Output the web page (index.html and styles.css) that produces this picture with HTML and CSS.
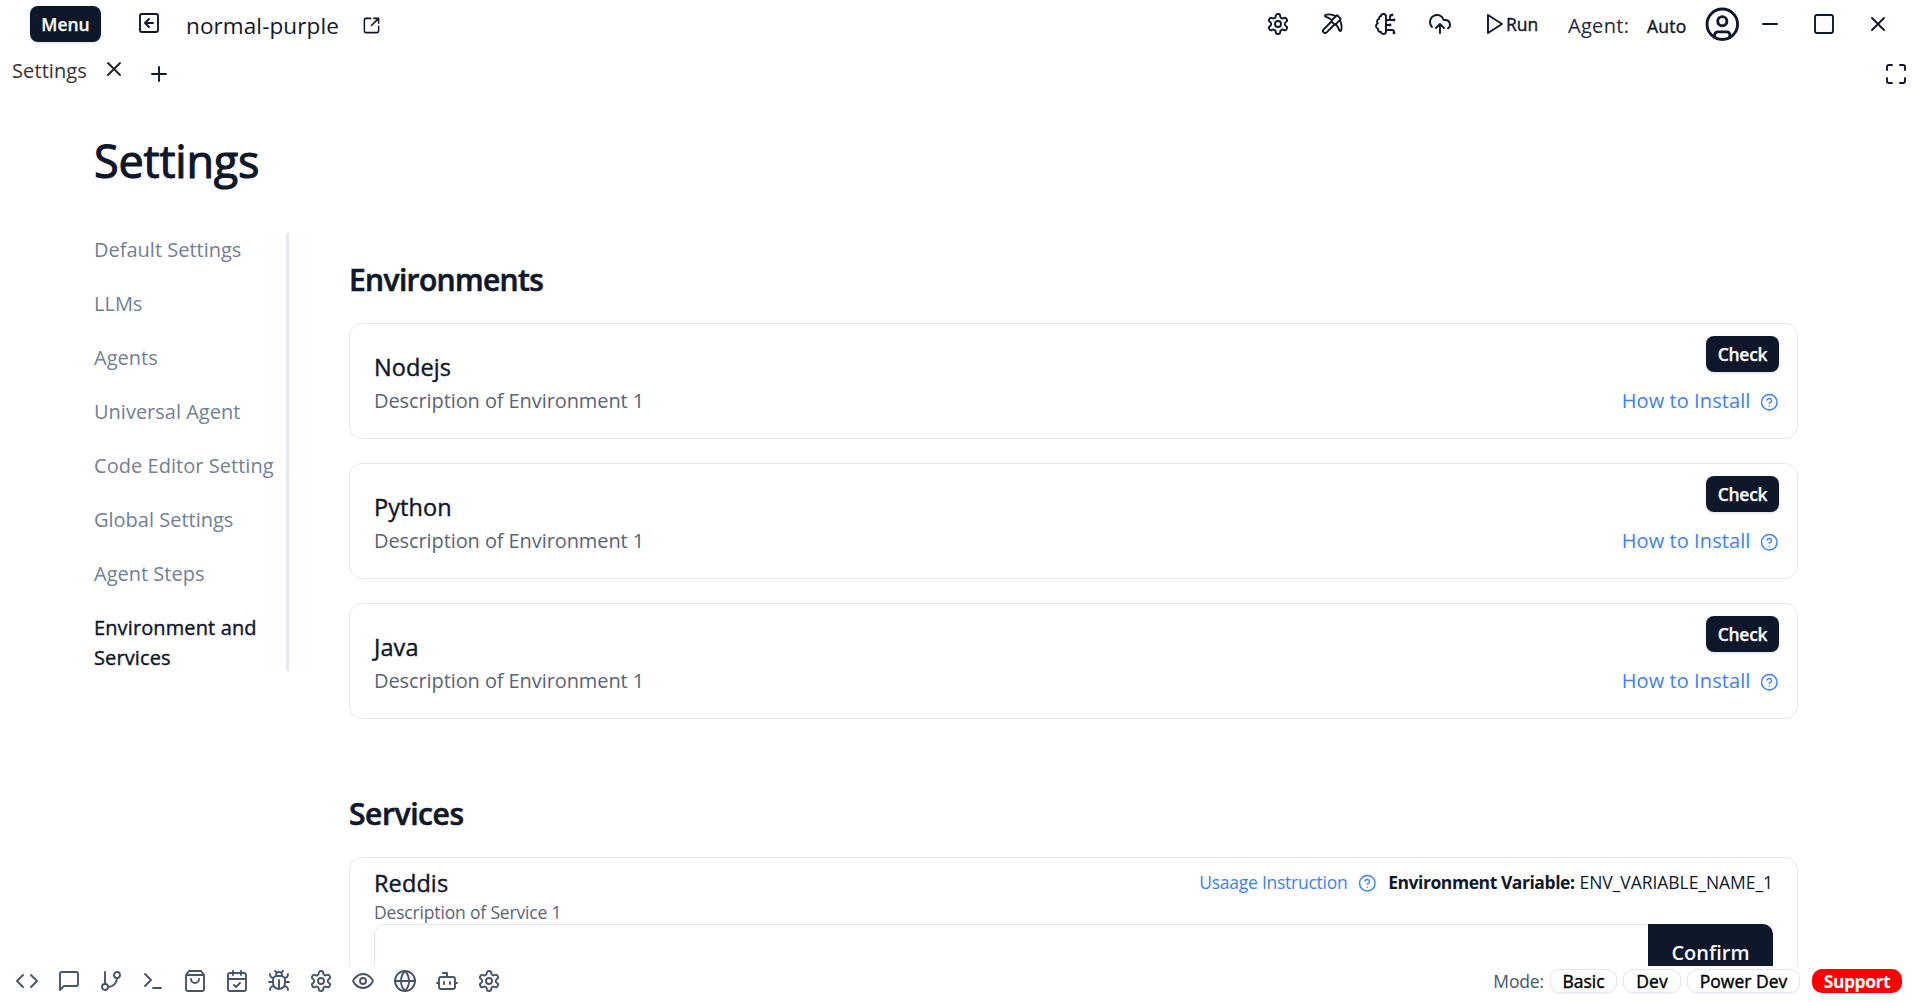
FILE: index.html
```html
<!DOCTYPE html>
<html lang="en">
<head>
<meta charset="utf-8">
<title>Settings</title>
<link rel="stylesheet" href="styles.css">
</head>
<body>
<svg class="sprite" aria-hidden="true">
  <symbol id="gear" viewBox="0 0 24 24"><path d="M12.22 2h-.44a2 2 0 0 0-2 2v.18a2 2 0 0 1-1 1.73l-.43.25a2 2 0 0 1-2 0l-.15-.08a2 2 0 0 0-2.73.73l-.22.38a2 2 0 0 0 .73 2.73l.15.1a2 2 0 0 1 1 1.72v.51a2 2 0 0 1-1 1.74l-.15.09a2 2 0 0 0-.73 2.73l.22.38a2 2 0 0 0 2.73.73l.15-.08a2 2 0 0 1 2 0l.43.25a2 2 0 0 1 1 1.73V20a2 2 0 0 0 2 2h.44a2 2 0 0 0 2-2v-.18a2 2 0 0 1 1-1.73l.43-.25a2 2 0 0 1 2 0l.15.08a2 2 0 0 0 2.73-.73l.22-.39a2 2 0 0 0-.73-2.73l-.15-.08a2 2 0 0 1-1-1.74v-.5a2 2 0 0 1 1-1.74l.15-.09a2 2 0 0 0 .73-2.73l-.22-.38a2 2 0 0 0-2.73-.73l-.15.08a2 2 0 0 1-2 0l-.43-.25a2 2 0 0 1-1-1.73V4a2 2 0 0 0-2-2z"/><circle cx="12" cy="12" r="3"/></symbol>
  <symbol id="close" viewBox="0 0 24 24"><path d="M18 6 6 18M6 6l12 12"/></symbol>
  <symbol id="help" viewBox="0 0 24 24"><circle cx="12" cy="12" r="10"/><path d="M9.09 9a3 3 0 0 1 5.83 1c0 2-3 3-3 3M12 17h.01"/></symbol>
</svg>

<header class="topbar">
  <button class="btn menu">Menu</button>
  <svg class="icon back" viewBox="0 0 24 24"><rect x="3" y="3" width="18" height="18" rx="2"/><path d="m12 8-4 4 4 4M16 12H8"/></svg>
  <span class="project">normal-purple</span>
  <svg class="icon external" viewBox="0 0 24 24"><path d="M21 13v6a2 2 0 0 1-2 2H5a2 2 0 0 1-2-2V5a2 2 0 0 1 2-2h6M21 3l-9 9M15 3h6v6"/></svg>
  <nav class="tools">
    <svg class="icon"><use href="#gear"/></svg>
    <svg class="icon" viewBox="0 0 24 24"><path d="M14.531 12.469 6.619 20.38a1 1 0 1 1-3-3l7.912-7.912"/><path d="M15.686 4.314A12.5 12.5 0 0 0 5.461 2.958 1 1 0 0 0 5.58 4.71a22 22 0 0 1 6.318 3.393"/><path d="M17.7 3.7a1 1 0 0 0-1.4 0l-4.6 4.6a1 1 0 0 0 0 1.4l2.6 2.6a1 1 0 0 0 1.4 0l4.6-4.6a1 1 0 0 0 0-1.4z"/><path d="M19.686 8.314a12.501 12.501 0 0 1 1.356 10.225 1 1 0 0 1-1.751-.119 22 22 0 0 0-3.393-6.319"/></svg>
    <svg class="icon" viewBox="0 0 24 24"><path d="M12 4.5a2.5 2.5 0 0 0-4.96-.46 2.5 2.5 0 0 0-1.98 3 2.5 2.5 0 0 0-1.32 4.24 3 3 0 0 0 .34 5.58 2.5 2.5 0 0 0 2.96 3.08 2.5 2.5 0 0 0 4.91.05L12 20V4.5Z"/><path d="M16 8V5c0-1.1.9-2 2-2M12 13h4M12 18h6a2 2 0 0 1 2 2v1M12 8h8"/><path d="M20.5 8a.5.5 0 1 1-1 0 .5.5 0 0 1 1 0ZM16.5 13a.5.5 0 1 1-1 0 .5.5 0 0 1 1 0ZM20.5 21a.5.5 0 1 1-1 0 .5.5 0 0 1 1 0ZM18.5 3a.5.5 0 1 1-1 0 .5.5 0 0 1 1 0Z"/></svg>
    <svg class="icon" viewBox="0 0 24 24"><path d="M4 14.899A7 7 0 1 1 15.71 8h1.79a4.5 4.5 0 0 1 2.5 8.242M12 12v9M16 16l-4-4-4 4"/></svg>
  </nav>
  <button class="run"><svg class="icon" viewBox="0 0 24 24"><path d="M5 3l14 9-14 9z"/></svg><span>Run</span></button>
  <span class="agent">Agent:</span>
  <span class="auto">Auto</span>
  <svg class="icon user" viewBox="0 0 24 24"><circle cx="12" cy="12" r="10"/><circle cx="12" cy="10" r="3"/><path d="M7 20.662V19a2 2 0 0 1 2-2h6a2 2 0 0 1 2 2v1.662"/></svg>
  <div class="window-controls">
    <svg class="icon" viewBox="0 0 24 24"><path d="M5 12h14"/></svg>
    <svg class="icon" viewBox="0 0 24 24"><rect x="3" y="3" width="18" height="18" rx="2"/></svg>
    <svg class="icon"><use href="#close"/></svg>
  </div>
</header>

<div class="tabs">
  <span class="tab">Settings</span>
  <svg class="icon tab-close"><use href="#close"/></svg>
  <svg class="icon tab-add" viewBox="0 0 24 24"><path d="M5 12h14M12 5v14"/></svg>
  <svg class="icon maximize" viewBox="0 0 24 24"><path d="M8 3H5a2 2 0 0 0-2 2v3M21 8V5a2 2 0 0 0-2-2h-3M3 16v3a2 2 0 0 0 2 2h3M16 21h3a2 2 0 0 0 2-2v-3"/></svg>
</div>

<main class="page">
  <h1>Settings</h1>
  <div class="columns">
    <nav class="sidebar">
      <a>Default Settings</a>
      <a>LLMs</a>
      <a>Agents</a>
      <a>Universal Agent</a>
      <a class="wide">Code Editor Setting</a>
      <a>Global Settings</a>
      <a>Agent Steps</a>
      <a class="active">Environment and Services</a>
    </nav>
    <div class="content">
      <h2 class="tight">Environments</h2>
      <section class="cards">
        <article class="card">
          <div><h3>Nodejs</h3><p>Description of Environment 1</p></div>
          <div class="actions"><button class="btn check">Check</button><a class="link">How to Install<svg class="icon help"><use href="#help"/></svg></a></div>
        </article>
        <article class="card">
          <div><h3>Python</h3><p>Description of Environment 1</p></div>
          <div class="actions"><button class="btn check">Check</button><a class="link">How to Install<svg class="icon help"><use href="#help"/></svg></a></div>
        </article>
        <article class="card">
          <div><h3>Java</h3><p>Description of Environment 1</p></div>
          <div class="actions"><button class="btn check">Check</button><a class="link">How to Install<svg class="icon help"><use href="#help"/></svg></a></div>
        </article>
      </section>
      <h2 class="services">Services</h2>
      <article class="service">
        <div class="service-head">
          <div><h3>Reddis</h3><p>Description of Service 1</p></div>
          <div class="usage"><a class="link small">Usaage Instruction<svg class="icon help"><use href="#help"/></svg></a><b>Environment Variable:</b><span>ENV_VARIABLE_NAME_1</span></div>
        </div>
        <div class="field"><input type="text" aria-label="Value"><button class="confirm">Confirm</button></div>
      </article>
    </div>
  </div>
</main>

<footer class="statusbar">
  <nav class="panels">
    <svg class="icon" viewBox="0 0 24 24"><path d="m16 18 6-6-6-6M8 6l-6 6 6 6"/></svg>
    <svg class="icon" viewBox="0 0 24 24"><path d="M21 15a2 2 0 0 1-2 2H7l-4 4V5a2 2 0 0 1 2-2h14a2 2 0 0 1 2 2z"/></svg>
    <svg class="icon" viewBox="0 0 24 24"><path d="M6 3v12M18 9a9 9 0 0 1-9 9"/><circle cx="18" cy="6" r="3"/><circle cx="6" cy="18" r="3"/></svg>
    <svg class="icon" viewBox="0 0 24 24"><path d="m4 17 6-6-6-6M12 19h8"/></svg>
    <svg class="icon" viewBox="0 0 24 24"><path d="M6 2 3 6v14a2 2 0 0 0 2 2h14a2 2 0 0 0 2-2V6l-3-4ZM3 6h18M16 10a4 4 0 0 1-8 0"/></svg>
    <svg class="icon" viewBox="0 0 24 24"><rect x="3" y="4" width="18" height="18" rx="2"/><path d="M8 2v4M16 2v4M3 10h18M9 16l2 2 4-4"/></svg>
    <svg class="icon" viewBox="0 0 24 24"><path d="m8 2 1.88 1.88M14.12 3.88 16 2M9 7.13v-1a3.003 3.003 0 1 1 6 0v1M12 20c-3.3 0-6-2.7-6-6v-3a4 4 0 0 1 4-4h4a4 4 0 0 1 4 4v3c0 3.3-2.7 6-6 6M12 20v-9M6.53 9C4.6 8.8 3 7.1 3 5M6 13H2M3 21c0-2.1 1.7-3.9 3.8-4M20.97 5c0 2.1-1.6 3.8-3.5 4M22 13h-4M17.2 17c2.1.1 3.8 1.9 3.8 4"/></svg>
    <svg class="icon"><use href="#gear"/></svg>
    <svg class="icon" viewBox="0 0 24 24"><path d="M2 12s3-7 10-7 10 7 10 7-3 7-10 7-10-7-10-7Z"/><circle cx="12" cy="12" r="3"/></svg>
    <svg class="icon" viewBox="0 0 24 24"><circle cx="12" cy="12" r="10"/><path d="M12 2a14.5 14.5 0 0 0 0 20 14.5 14.5 0 0 0 0-20M2 12h20"/></svg>
    <svg class="icon" viewBox="0 0 24 24"><path d="M12 8V4H8M2 14h2M20 14h2M15 13v2M9 13v2"/><rect x="4" y="8" width="16" height="12" rx="2"/></svg>
    <svg class="icon"><use href="#gear"/></svg>
  </nav>
  <div class="modes">
    <span class="mode-label">Mode:</span>
    <button class="pill basic">Basic</button>
    <button class="pill dev">Dev</button>
    <button class="pill power">Power Dev</button>
    <button class="support">Support</button>
  </div>
</footer>
</body>
</html>
```
FILE: styles.css
```css
* { box-sizing: border-box; }

body {
  margin: 0;
  height: 100vh;
  overflow: hidden;
  display: flex;
  flex-direction: column;
  background: #fff;
  color: #0f172a;
  font: 20px/30px "Open Sans", "Noto Sans", sans-serif;
}

h1, h2, h3, p { margin: 0; }
button { font-family: inherit; border: 0; padding: 0; white-space: nowrap; }

/* Medium weight for text between regular and semibold */
h3, .run span, .auto, .pill, .sidebar a.active { -webkit-text-stroke: .4px currentColor; }

.sprite { display: none; }
.icon {
  flex: none;
  width: 24px;
  height: 24px;
  fill: none;
  stroke: currentColor;
  stroke-width: 1.9;
  stroke-linecap: round;
  stroke-linejoin: round;
}

.btn {
  height: 36px;
  border-radius: 8px;
  background: #0f172a;
  color: #f8fafc;
  font-size: 17.5px;
  font-weight: 600;
  line-height: 36px;
  box-shadow: 0 1px 3px rgba(15, 23, 42, .15);
  -webkit-text-stroke: .25px currentColor;
}

/* Top bar */
.topbar {
  flex: none;
  display: flex;
  align-items: center;
  height: 48px;
  padding: 0 23px 0 30px;
}
.menu { width: 71px; }
.back { margin: -2px 0 0 36px; }
.project { margin: 4px 0 0 25px; width: 152px; font-size: 22.5px; letter-spacing: .1px; white-space: nowrap; }
.external { margin: 2px 0 0 24px; width: 19px; height: 19px; }
.tools { display: flex; gap: 30px; margin-left: auto; }
.run {
  display: flex;
  align-items: center;
  width: 55px;
  margin-left: 31px;
  background: none;
  color: inherit;
  font-size: 17.5px;
  font-weight: 500;
}
.run .icon { margin-right: -1px; }
.agent { width: 62px; margin: 3px 0 0 30px; color: #1e293b; letter-spacing: .3px; }
.auto { width: 40px; margin: 4px 17px 0 17px; font-size: 17.5px; font-weight: 500; letter-spacing: .2px; }
.user { width: 36.6px; height: 36.6px; }
.window-controls { display: flex; gap: 30px; margin-left: 17.4px; }

/* Tabs */
.tabs {
  flex: none;
  display: flex;
  align-items: center;
  height: 48px;
  padding: 0 5px 0 12px;
}
.tab { width: 76px; margin-top: -2px; color: #333; letter-spacing: .1px; }
.tab-close { margin: -6px 0 0 14px; color: #222; }
.tab-add { margin: 4px 0 0 21px; }
.maximize { margin: 4px 0 0 auto; }

/* Page */
.page { flex: 1; min-height: 0; overflow: hidden; padding: 35px 115px 0 94px; }
h1 { font-size: 45px; font-weight: 500; line-height: 60px; letter-spacing: -.2px; -webkit-text-stroke: 1.1px currentColor; }
.columns { display: flex; align-items: flex-start; margin-top: 42px; }

.sidebar {
  flex: none;
  display: flex;
  flex-direction: column;
  gap: 24px;
  width: 195px;
  height: 438px;
  padding-top: 1.5px;
  border-right: 3px solid #e2e8f0;
  color: #718096;
}
.sidebar a.wide { letter-spacing: .04px; white-space: nowrap; }
.sidebar a.active { color: #0f172a; font-weight: 500; letter-spacing: .12px; }

.content { flex: 1; margin-left: 60px; padding-top: 28px; }
h2 { font-size: 30px; font-weight: 600; line-height: 38px; letter-spacing: -.4px; -webkit-text-stroke: .6px currentColor; }
h2.tight { letter-spacing: -.65px; }
h3 { font-size: 23.5px; font-weight: 500; line-height: 34px; letter-spacing: .1px; }
.card p, .service p { color: #5b6474; }

.cards { display: grid; gap: 24px; margin-top: 24px; }
.card {
  display: flex;
  justify-content: space-between;
  height: 116px;
  padding: 26px 18px 0 24px;
  border: 1px solid #e2e8f0;
  border-radius: 13px;
}
.card p { line-height: 34px; letter-spacing: -.09px; }
.actions { display: flex; flex-direction: column; align-items: flex-end; margin-top: -14px; }
.check { width: 73px; letter-spacing: -.3px; }
.link { display: flex; align-items: center; color: #3b82f6; letter-spacing: .08px; }
.actions .link { margin-top: 14px; }
.help { width: 18.6px; height: 18.6px; }
.actions .help { margin: 2px 0 0 10px; }

.services { margin-top: 76px; }
.service {
  height: 180px;
  margin-top: 24px;
  padding: 8px 24px 0;
  border: 1px solid #e2e8f0;
  border-radius: 13px;
}
.service-head { display: flex; justify-content: space-between; height: 58px; }
.service p { font-size: 17.5px; line-height: 24px; letter-spacing: -.17px; }
.usage { display: flex; height: 30px; align-items: center; font-size: 17.5px; margin-top: 1px; }
.usage b { margin: 0 5px 0 12px; letter-spacing: -.44px; }
.usage span { letter-spacing: -.05px; }
.link.small { letter-spacing: -.25px; }
.link.small .help { margin: 2px 0 0 10px; }
.field { display: flex; height: 60px; }
.field input {
  flex: 1;
  border: 1px solid #e2e8f0;
  border-right: 0;
  border-radius: 10px 0 0 10px;
}
.confirm {
  width: 125px;
  padding-bottom: 4px;
  border-radius: 0 10px 10px 0;
  background: #0f172a;
  color: #f8fafc;
  font-size: 20px;
  font-weight: 600;
}

/* Status bar */
.statusbar {
  flex: none;
  display: flex;
  align-items: center;
  justify-content: space-between;
  height: 37px;
  padding: 0 11px 7px 15px;
}
.panels { display: flex; gap: 18px; color: #475569; }
.modes { display: flex; align-items: center; font-size: 17.5px; }
.mode-label { margin-right: 6px; color: #475569; letter-spacing: -.15px; }
.pill, .support { height: 24px; border-radius: 10px; font-size: 17.5px; line-height: 22px; }
.pill {
  margin-right: 6px;
  border: 1px solid #e2e8f0;
  background: #fff;
  color: #000;
  font-weight: 500;
  box-shadow: 0 1px 2px rgba(15, 23, 42, .06);
}
.basic { width: 67px; }
.dev { width: 58px; }
.power { width: 113px; }
.support { width: 90px; margin-left: 6px; background: #f00; color: #fff; font-weight: 700; letter-spacing: -.45px; }
```
